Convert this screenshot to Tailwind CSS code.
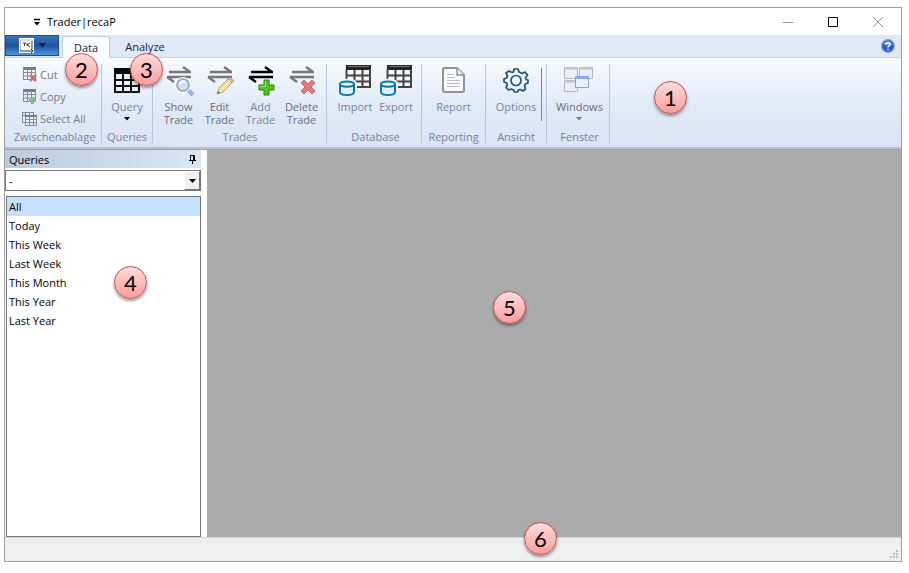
<!DOCTYPE html>
<html lang="en">
<head>
<meta charset="utf-8">
<title>Trader|recaP</title>
<script src="https://cdn.jsdelivr.net/npm/@tailwindcss/browser@4"></script>
</head>
<body class="relative h-screen overflow-hidden bg-white pt-[7px] pr-[7px] pb-[11px] pl-1 font-['Open_Sans','Noto_Sans',sans-serif] text-[11px] leading-[13px] text-black">

<svg class="hidden">
  <defs>
    <g id="arrows" fill="none" stroke-width="2.300">
      <path d="M6 8H28M20 3L27 8M28 13H4M4 13L11 18"/>
    </g>
    <g id="smallgrid">
      <path d="M1 1.500H14" stroke="#777b84" stroke-width="3" fill="none"/>
      <path d="M1.500 1V12.500H13.500V1M1.500 5.500H13.500M1.500 9H13.500M5.500 2V12.500M9.500 2V12.500" stroke="#858991" fill="none"/>
    </g>
    <g id="database">
      <path d="M8 1H32V23H8Z" fill="#f4f6fa"/>
      <path d="M8 1H33V6H8Z" fill="#222"/>
      <path d="M10 2.500H31" stroke="#777" fill="none"/>
      <path d="M8.500 5V15M32 5V23H17M9 11.500H32M14 17.500H32M16.500 6V16M24.500 6V23" stroke="#444" stroke-width="2" fill="none"/>
      <path d="M1 20C1 15.500 17 15.500 17 20V28C17 32.500 1 32.500 1 28Z" fill="#e9f4fa" stroke="#eef4fb" stroke-width="4"/>
      <path d="M2 20C2 16.500 16 16.500 16 20V28C16 32 2 32 2 28ZM2 20C2 23.500 16 23.500 16 20" fill="#dff0f8" stroke="#0c7aa8" stroke-width="2"/>
    </g>
  </defs>
</svg>

<div class="flex h-full flex-col border border-[#a0a0a0] bg-white">

  <header class="flex h-[27px] shrink-0 items-center pl-7">
    <button aria-label="Customize quick access" class="w-[10px]"><svg width="8" height="8" viewBox="0 0 8 8" class="block"><path d="M1 1.500H7" stroke="#000" stroke-width="1.500"/><path d="M1 4H7L4 7.500Z"/></svg></button>
    <h1 class="ml-1">Trader|recaP</h1>
    <div class="ml-auto flex pr-[1px]">
      <button aria-label="Minimize" class="flex w-[45px] justify-center"><svg width="12" height="12" viewBox="0 0 12 12"><path d="M1 6.500H11" stroke="#999"/></svg></button>
      <button aria-label="Maximize" class="flex w-[45px] justify-center"><svg width="12" height="12" viewBox="0 0 12 12"><path d="M1.500 1.500H10.500V10.500H1.500Z" stroke="#000" fill="none"/></svg></button>
      <button aria-label="Close" class="flex w-[45px] justify-center"><svg width="12" height="12" viewBox="0 0 12 12"><path d="M1 1L11 11M11 1L1 11" stroke="#999"/></svg></button>
    </div>
  </header>

  <nav class="flex h-[23px] shrink-0 items-end border-b border-[#c5d3e4] bg-[#dfe8f5]">
    <button aria-label="Application menu" class="mb-px flex h-[21px] w-[54px] items-center justify-center gap-[5px] border border-[#1c4a94] bg-linear-to-b from-[#3f74bd] via-[#1d529f] to-[#4b94e0]">
      <svg width="15" height="15" viewBox="0 0 15 15"><path d="M0 0H15V15H0Z" fill="#fff"/><path d="M1.500 13V2H12.500" stroke="#bbb" fill="none"/><path d="M1 13H14M12 11L14 13L12 15M13 3V11" stroke="#333" fill="none"/><path d="M4 5H7M5.500 5V8M8 5V8M11 5L8 7L11 9" stroke="#444" fill="none"/></svg>
      <svg width="7" height="5" viewBox="0 0 7 5"><path d="M0 0H7L3.500 4.500Z" fill="#0b1c3c"/></svg>
    </button>
    <button class="-mb-px ml-[3px] h-[22px] w-12 rounded-t-[3px] border border-b-0 border-[#c0cfe2] bg-[#f8fbff] font-medium text-[#1b2440]">Data</button>
    <button class="ml-[9px] h-[21px] w-[52px] font-medium text-[#1b2440]">Analyze</button>
    <button aria-label="Help" class="mr-[6px] mb-[4px] ml-auto"><svg width="14" height="14" viewBox="0 0 14 14" class="block"><circle cx="7" cy="7" r="6.300" fill="#1d5bd0" stroke="#8a9cbb" stroke-width="1.400"/><path d="M2.500 5C4 2 10 2 11.500 5C10 7 4 7 2.500 5Z" fill="#6c9cf0"/><path d="M5 5.500C5 3 9 3 9 5.300C9 7 7 6.800 7 8.500M7 9.700V11" stroke="#fff" stroke-width="1.500" fill="none"/></svg></button>
  </nav>

  <section aria-label="Ribbon" class="flex h-[91px] shrink-0 border-b-2 border-[#b3c3d7] bg-linear-to-b from-[#f8fbff] via-[#e2ebf7] to-[#dae5f4] pt-[6px] pb-[4px] text-[#7584a0]">
    <div class="flex w-[97px] flex-col justify-between border-r border-[#b9c7da] text-center">
      <div class="flex flex-col gap-[2px] text-[#777d89]">
        <button class="flex h-5 items-center gap-[3px] pl-[17px]"><svg width="15" height="15" viewBox="0 0 15 15"><use href="#smallgrid"/><path d="M8 8L14 14M14 8L8 14" stroke="#cf6d72" stroke-width="2.500"/></svg>Cut</button>
        <button class="flex h-5 items-center gap-[3px] pl-[17px]"><svg width="15" height="15" viewBox="0 0 15 15"><use href="#smallgrid"/><path d="M10.500 8V15M7 11.500H14" stroke="#80bd78" stroke-width="3"/></svg>Copy</button>
        <button class="flex h-5 items-center gap-[3px] pl-[17px]"><svg width="15" height="15" viewBox="0 0 15 15"><path d="M0 1.500H12M.5 1V11.500H3M.5 4.500H12M3.500 1V4M7.500 1V4M11.500 1V4" stroke="#858991" fill="none"/><path d="M3 4H15V15H3Z" fill="#edf1f7"/><path d="M3 5H15" stroke="#777b84" stroke-width="2"/><path d="M3.500 5V14.500H14.500V5M3 8.500H15M3 11.500H15M7.500 5V15M11.500 5V15" stroke="#858991" fill="none"/></svg>Select All</button>
      </div>
      <h2 class="pl-[3px]">Zwischenablage</h2>
    </div>

    <div class="flex w-[51px] flex-col items-center justify-between border-r border-[#b9c7da]">
      <button class="flex flex-col items-center gap-[4px]"><svg width="32" height="32" viewBox="0 0 32 32"><path d="M3 4H29V10H3Z" fill="#080808"/><path d="M4 6V28H28V6M4 16H28M4 22H28M12 10V28M20 10V28" stroke="#111" stroke-width="2" fill="none"/></svg><span>Query</span><svg width="6" height="4" viewBox="0 0 6 4"><path d="M0 0H6L3 3.500Z" fill="#000"/></svg></button>
      <h2>Queries</h2>
    </div>

    <div class="flex w-[174px] flex-col items-center justify-between border-r border-[#b9c7da] pl-px">
      <div class="flex text-[#6a6e77]">
        <button class="flex w-[41px] flex-col items-center gap-[4px]"><svg width="32" height="32" viewBox="0 0 32 32"><use href="#arrows" stroke="#777"/><path d="M24 25L30 31" stroke="#91b3df" stroke-width="4"/><circle cx="20" cy="21" r="6" fill="#d4e6f7" stroke="#fff" stroke-width="4"/><circle cx="20" cy="21" r="6" fill="#cfe3f8" stroke="#a4adba" stroke-width="2"/><path d="M17 20C18 17 21 17 22 18" stroke="#fff" stroke-width="1.500" fill="none"/></svg><span>Show<br>Trade</span></button>
        <button class="flex w-[41px] flex-col items-center gap-[4px]"><svg width="32" height="32" viewBox="0 0 32 32"><use href="#arrows" stroke="#777"/><path d="M13 30L15 24L26 13L30 17L19 28Z" fill="#f3dfa0" stroke="#b6a478"/><path d="M24 15L26 13L30 17L28 19Z" fill="#e9a3a3" stroke="#c99"/><path d="M16 27L27 16" stroke="#fff4c8"/><path d="M13 30L14 27L16 29Z" fill="#777"/></svg><span>Edit<br>Trade</span></button>
        <button class="flex w-[41px] flex-col items-center gap-[4px] text-[#7584a0]"><svg width="32" height="32" viewBox="0 0 32 32"><use href="#arrows" stroke="#000"/><path d="M19 16H24V21H29V26H24V31H19V26H14V21H19Z" fill="#55c51f" stroke="#2b8114"/><path d="M20.500 17V22.500H15" stroke="#a4e77f" fill="none"/></svg><span>Add<br>Trade</span></button>
        <button class="flex w-[41px] flex-col items-center gap-[4px]"><svg width="32" height="32" viewBox="0 0 32 32"><use href="#arrows" stroke="#777"/><path d="M15 19L18 16L22 20L26 16L29 19L25 23L29 27L26 30L22 26L18 30L15 27L19 23Z" fill="#df7b7b" stroke="#c46b6e"/></svg><span>Delete<br>Trade</span></button>
      </div>
      <h2>Trades</h2>
    </div>

    <div class="flex w-[95px] flex-col items-center justify-between border-r border-[#b9c7da] pl-[3px]">
      <div class="flex">
        <button class="flex w-[41px] flex-col items-center gap-[4px]"><svg width="34" height="32" viewBox="0 0 34 32"><use href="#database"/></svg><span>Import</span></button>
        <button class="flex w-[41px] flex-col items-center gap-[4px]"><svg width="34" height="32" viewBox="0 0 34 32"><use href="#database"/></svg><span>Export</span></button>
      </div>
      <h2>Database</h2>
    </div>

    <div class="flex w-16 flex-col items-center justify-between border-r border-[#b9c7da]">
      <button class="flex flex-col items-center gap-[4px]"><svg width="32" height="32" viewBox="0 0 32 32"><path d="M7 4H20L27 11V26Q27 28 25 28H8Q6 28 6 26V5Z" fill="#fbfcff" stroke="#929292" stroke-width="2"/><path d="M20 4V11H27" fill="#eee" stroke="#929292" stroke-width="1.500"/><path d="M10 10.500H17M10 13.500H18M10 16.500H23M10 19.500H23M10 22.500H23" stroke="#b8b8d2"/></svg><span>Report</span></button>
      <h2>Reporting</h2>
    </div>

    <div class="relative flex w-[61px] flex-col items-center justify-between border-r border-[#b9c7da]">
      <button class="flex flex-col items-center gap-[4px]"><svg width="32" height="32" viewBox="0 0 32 32" fill="none" stroke="#245571" stroke-width="1.700" stroke-linejoin="round"><path d="M14 5H18L19 8L22 9.500L25 8L27.500 11L25.500 14L26 15.500L28 16V19L25.500 20L24.500 22L25.500 25L23 27L20 25.500L18.500 26L17.500 28H14.500L13.500 26L11.500 25L8.500 26L6 23.500L7.500 20.500L6.500 19L4 18V15L6.500 14L7.500 12L6 9L9 7L12 8.500L13.500 8Z"/><circle cx="16" cy="16.500" r="5"/></svg><span>Options</span></button>
      <h2>Ansicht</h2>
      <div class="absolute top-[4px] right-1 h-[53px] w-px bg-[#7b8595]"></div>
    </div>

    <div class="flex w-[63px] flex-col items-center justify-between border-r border-[#b9c7da] pl-[3px]">
      <button class="flex flex-col items-center gap-[4px] text-[#6a6e77]"><svg width="32" height="32" viewBox="0 0 32 32"><path d="M1.500 3.500H14.500V14.500H1.500ZM16.500 3.500H29.500V14.500H16.500ZM1.500 16.500H14.500V27.500H1.500Z" fill="#eceef1" stroke="#b4b7bd"/><path d="M2 4.500H14M17 4.500H29M2 17.500H14" stroke="#c3c6cb" stroke-width="2"/><path d="M12.500 12.500H25.500V23.500H12.500Z" fill="#e8f0fb" stroke="#8ba0c4"/><path d="M12 13.500H26" stroke="#86abea" stroke-width="3"/></svg><span>Windows</span><svg width="6" height="4" viewBox="0 0 6 4"><path d="M0 0H6L3 3.500Z" fill="#777"/></svg></button>
      <h2>Fenster</h2>
    </div>
  </section>

  <main class="flex min-h-0 flex-1 border-t border-[#a0a0a0]">
    <aside class="flex w-[202px] shrink-0 flex-col pr-[6px]">
      <div class="flex h-[18px] shrink-0 items-center justify-between bg-linear-to-r from-[#bccbdb] to-[#d9e6f6] pr-1 pl-1">
        <label for="filter">Queries</label>
        <button aria-label="Pin panel"><svg width="9" height="9" viewBox="0 0 9 9" class="block"><path d="M2.500 5V.5H6.500V5M1 5.500H8M4.500 6V9M5.500 1V5" stroke="#000" fill="none"/></svg></button>
      </div>
      <div class="relative mt-[2px] h-[21px] shrink-0 border border-[#777]">
        <select id="filter" class="block h-full w-full appearance-none bg-white pl-[3px] outline-none"><option>-</option></select>
        <span class="pointer-events-none absolute inset-y-0 right-0 flex w-4 items-center justify-center border border-white border-r-[#777] border-b-[#777] bg-[#f0f0f0]"><svg width="7" height="4" viewBox="0 0 7 4"><path d="M0 0H7L3.500 4Z"/></svg></span>
      </div>
      <ul class="mt-[5px] ml-px min-h-0 flex-1 border border-[#777] leading-[19px]">
        <li><button class="block w-full bg-[#c8e0ff] pl-[2px] text-left">All</button></li>
        <li><button class="block w-full pl-[2px] text-left">Today</button></li>
        <li><button class="block w-full pl-[2px] text-left">This Week</button></li>
        <li><button class="block w-full pl-[2px] text-left">Last Week</button></li>
        <li><button class="block w-full pl-[2px] text-left">This Month</button></li>
        <li><button class="block w-full pl-[2px] text-left">This Year</button></li>
        <li><button class="block w-full pl-[2px] text-left">Last Year</button></li>
      </ul>
    </aside>
    <section aria-label="Workspace" class="flex-1 bg-[#ababab]"></section>
  </main>

  <footer class="flex h-6 shrink-0 items-end justify-end border-t border-[#d5d5d5] bg-[#efefef] p-[2px]">
    <svg width="9" height="9" viewBox="0 0 9 9" fill="#bdbdbd"><path d="M6 0H8V2H6ZM3 3H5V5H3ZM6 3H8V5H6ZM0 6H2V8H0ZM3 6H5V8H3ZM6 6H8V8H6Z"/></svg>
  </footer>
</div>

<span class="absolute top-[81px] left-[654px] flex size-[33px] items-center justify-center rounded-full border border-[#c0504d] bg-linear-to-b from-[#ffdcdc] to-[#ff9c9c] font-['Lato',sans-serif] text-[22px] shadow-[0_2px_3px_rgba(0,0,0,0.4)]">1</span>
<span class="absolute top-[53px] left-[65px] flex size-[33px] items-center justify-center rounded-full border border-[#c0504d] bg-linear-to-b from-[#ffdcdc] to-[#ff9c9c] font-['Lato',sans-serif] text-[22px] shadow-[0_2px_3px_rgba(0,0,0,0.4)]">2</span>
<span class="absolute top-[53px] left-[130px] flex size-[33px] items-center justify-center rounded-full border border-[#c0504d] bg-linear-to-b from-[#ffdcdc] to-[#ff9c9c] font-['Lato',sans-serif] text-[22px] shadow-[0_2px_3px_rgba(0,0,0,0.4)]">3</span>
<span class="absolute top-[266px] left-[114px] flex size-[33px] items-center justify-center rounded-full border border-[#c0504d] bg-linear-to-b from-[#ffdcdc] to-[#ff9c9c] font-['Lato',sans-serif] text-[22px] shadow-[0_2px_3px_rgba(0,0,0,0.4)]">4</span>
<span class="absolute top-[291px] left-[493px] flex size-[33px] items-center justify-center rounded-full border border-[#c0504d] bg-linear-to-b from-[#ffdcdc] to-[#ff9c9c] font-['Lato',sans-serif] text-[22px] shadow-[0_2px_3px_rgba(0,0,0,0.4)]">5</span>
<span class="absolute top-[522px] left-[524px] flex size-[33px] items-center justify-center rounded-full border border-[#c0504d] bg-linear-to-b from-[#ffdcdc] to-[#ff9c9c] font-['Lato',sans-serif] text-[22px] shadow-[0_2px_3px_rgba(0,0,0,0.4)]">6</span>
</body>
</html>
